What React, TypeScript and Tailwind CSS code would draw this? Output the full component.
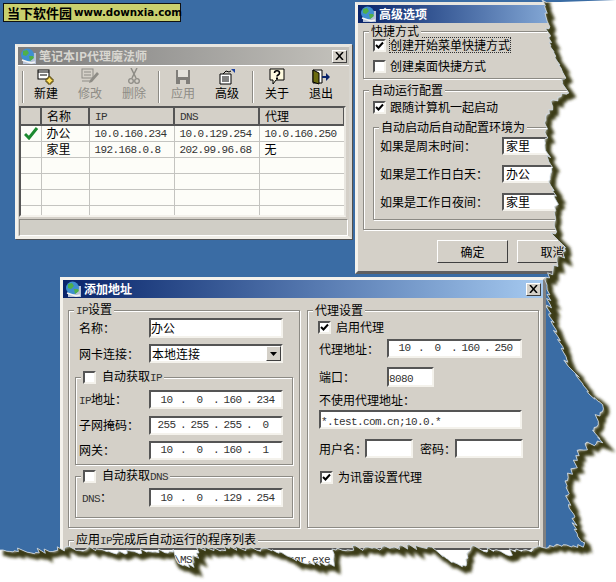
import React from 'react';

const MONO = "[font-family:'Liberation_Mono','Noto_Sans_CJK_SC',monospace] text-[11px] tracking-[-0.6px] text-[#333]";
const raised = 'border border-t-white border-l-white border-r-[#404040] border-b-[#404040] bg-[#d4d0c8]';
const sunken = 'border-2 border-t-[#555] border-l-[#555] border-r-[#f4f2ec] border-b-[#f4f2ec] bg-white';

// torn paper outline, hand read from the screenshot
const EDGE: [number, number][] = [
  [544, 0], [547, 15], [547, 30], [550, 45], [557, 60], [563, 70], [563, 83], [566, 90], [553, 100], [545, 130],
  [547, 150], [553, 170], [550, 180], [557, 200], [557, 212], [553, 235], [563, 245], [567, 249], [557, 262],
  [550, 272], [547, 285], [548, 300], [550, 315], [553, 325], [563, 350], [567, 365], [577, 375], [583, 385],
  [590, 395], [603, 405], [597, 420], [593, 430], [600, 440], [580, 450], [577, 460], [567, 480], [567, 500],
  [573, 515], [575, 530], [580, 540], [587, 545], [550, 546], [540, 548], [517, 550], [507, 553], [470, 547],
  [466, 566], [452, 563], [430, 546], [400, 547], [343, 548], [333, 550], [332, 564], [300, 561], [270, 549],
  [197, 548], [195, 566], [178, 563], [175, 551], [117, 552], [83, 548], [40, 551], [0, 550],
];

function tornPath() {
  let d = '';
  let k = 1;
  for (let i = 0; i < EDGE.length - 1; i++) {
    const [x1, y1] = EDGE[i];
    const [x2, y2] = EDGE[i + 1];
    const n = Math.max(1, Math.ceil(Math.hypot(x2 - x1, y2 - y1) / 3));
    for (let s = 0; s < n; s++) {
      const t = s / n;
      const r = Math.sin(k * 12.9898) * 43758.5453;
      const f = r - Math.floor(r) - 0.5;
      k++;
      const x = x1 + (x2 - x1) * t + f * 6;
      const y = y1 + (y2 - y1) * t + f * 6;
      d += `${d ? 'L' : 'M'}${x.toFixed(1)} ${y.toFixed(1)} `;
    }
  }
  return d + 'L0 550';
}
const EDGE_PATH = tornPath();

function TornEdge() {
  const white = `${EDGE_PATH} L0 582 L616 582 L616 0 Z`;
  return (
    <svg className="absolute inset-0" width="616" height="582" viewBox="0 0 616 582">
      <defs>
        <clipPath id="paper">
          <path d={white} />
        </clipPath>
        <filter id="soft">
          <feGaussianBlur stdDeviation="1.6" />
        </filter>
      </defs>
      <path d={white} fill="#ffffff" />
      <g clipPath="url(#paper)">
        <path d={EDGE_PATH} transform="translate(3 3)" fill="none" stroke="#3a3a12" strokeWidth="6" filter="url(#soft)" />
      </g>
      <path d={EDGE_PATH} fill="none" stroke="#cfdbe6" strokeWidth="0.8" />
    </svg>
  );
}

function Globe() {
  return (
    <svg width="17" height="17" viewBox="0 0 17 17" className="shrink-0">
      <rect x="3" y="5" width="13" height="11" fill="#b8c4d8" />
      <circle cx="7.5" cy="7" r="6.5" fill="#3f8fd0" />
      <path d="M3 3l4-1 2 3-3 3-3-1zM9 8l4 0 1 2-4 3z" fill="#4fb04a" />
      <path d="M2 12l9 3 4-1" stroke="#f4f4f4" strokeWidth="1.5" fill="none" />
    </svg>
  );
}

function CloseBox() {
  return (
    <div className={`${raised} w-[15px] h-[13px] flex items-center justify-center`}>
      <svg width="9" height="8" viewBox="0 0 9 8">
        <path d="M1 0l7 8M8 0l-7 8" stroke="#000" strokeWidth="1.5" fill="none" />
      </svg>
    </div>
  );
}

function TitleBar({ title, inactive, close = true }: { title: string; inactive?: boolean; close?: boolean }) {
  return (
    <div
      className={`flex items-center h-[18px] pl-[2px] pr-[2px] gap-[2px] ${
        inactive ? 'bg-gradient-to-r from-[#7c7c7c] to-[#c4c2bc]' : 'bg-gradient-to-r from-[#0a246a] to-[#a6caf0]'
      }`}
    >
      <Globe />
      <span className={`flex-1 font-bold text-[12px] leading-none whitespace-nowrap ${inactive ? 'text-[#d8d6d0]' : 'text-white'}`}>{title}</span>
      {close && <CloseBox />}
    </div>
  );
}

function Group({ title, legend, className, children }: { title?: string; legend?: React.ReactNode; className: string; children?: React.ReactNode }) {
  return (
    <div className={`relative border border-[#8c8a84] shadow-[1px_1px_0_#fff,inset_1px_1px_0_#fff] ${className}`}>
      <div className="absolute top-[-8px] left-[5px] bg-[#d4d0c8] px-[2px] h-[14px] leading-[14px] flex items-center whitespace-nowrap">
        {legend ?? title}
      </div>
      {children}
    </div>
  );
}

function Check({ on }: { on?: boolean }) {
  return (
    <div className={`${sunken} w-[13px] h-[13px] shrink-0 flex items-center justify-center`}>
      {on && (
        <svg width="9" height="9" viewBox="0 0 9 9">
          <path d="M1 4l2.5 2.5L8 1.5" stroke="#000" strokeWidth="2" fill="none" />
        </svg>
      )}
    </div>
  );
}

function Mono({ children }: { children: React.ReactNode }) {
  return <span className={MONO}>{children}</span>;
}

function IpField({ parts, className }: { parts: string[]; className: string }) {
  return (
    <div className={`${sunken} h-[19px] flex items-center pl-[2px] ${className}`}>
      {parts.map((p, i) => (
        <div key={i} className="flex w-[33px] shrink-0">
          <span className={`${MONO} w-[27px] text-center`}>{p}</span>
          {i < 3 && <span className={`${MONO} w-[6px] text-center`}>.</span>}
        </div>
      ))}
    </div>
  );
}

function ToolBtn({ label, off, children }: { label: string; off?: boolean; children: React.ReactNode }) {
  return (
    <div className={`w-[44px] flex flex-col items-center ${off ? 'text-[#8e8c86]' : 'text-black'}`}>
      <div className="h-[17px] flex items-center justify-center">{children}</div>
      <div className="text-[12px] leading-[14px] mt-[1px] whitespace-nowrap">{label}</div>
    </div>
  );
}

const Sep = () => <div className="w-[2px] h-[32px] self-center border-l border-l-[#8c8a84] border-r border-r-white" />;

const rows = [
  { name: '办公', ip: '10.0.160.234', dns: '10.0.129.254', proxy: '10.0.160.250', on: true },
  { name: '家里', ip: '192.168.0.8', dns: '202.99.96.68', proxy: '无' },
  {}, {}, {}, {},
] as { name?: string; ip?: string; dns?: string; proxy?: string; on?: boolean }[];

function MainWindow() {
  return (
    <div className="absolute left-[15px] top-[44px] w-[337px] h-[195px] bg-[#d4d0c8] border-[3px] border-t-[#e8e6e0] border-l-[#f4f2ec] border-r-[#d8d6d0] border-b-[#f0eee8] shadow-[1px_1px_0_#505050]">
      <TitleBar title="笔记本IP代理魔法师" inactive />
      <div className="flex items-start h-[41px] pt-[2px] pl-[4px] border-t border-t-white">
        <Sep />
        <ToolBtn label="新建">
          <svg width="18" height="16" viewBox="0 0 18 16">
            <rect x="1" y="1" width="11" height="9" fill="#fff" stroke="#000" />
            <path d="M1 3h11M3 6h7" stroke="#000" />
            <path d="M11 8h3v2h2v3h-2v2h-3v-2H9v-3h2z" fill="#ffe060" stroke="#504000" />
          </svg>
        </ToolBtn>
        <ToolBtn label="修改" off>
          <svg width="20" height="17" viewBox="0 0 20 17">
            <rect x="2" y="1" width="11" height="9" fill="#d4d0c8" stroke="#8e8c86" />
            <path d="M4 4h7M4 7h7M2 13h8" stroke="#8e8c86" />
            <path d="M17 4l2 2-7 8-3 1 1-3z" fill="#8e8c86" />
          </svg>
        </ToolBtn>
        <ToolBtn label="删除" off>
          <svg width="12" height="17" viewBox="0 0 12 17">
            <path d="M3 0l5 10M9 0L4 10" stroke="#8e8c86" strokeWidth="1.5" />
            <circle cx="3" cy="13" r="2.3" fill="none" stroke="#8e8c86" strokeWidth="1.3" />
            <circle cx="9" cy="13" r="2.3" fill="none" stroke="#8e8c86" strokeWidth="1.3" />
          </svg>
        </ToolBtn>
        <div className="w-[2px]" />
        <Sep />
        <div className="w-[1px]" />
        <ToolBtn label="应用" off>
          <svg width="16" height="16" viewBox="0 0 16 16">
            <rect x="1" y="1" width="14" height="14" fill="#807e7a" />
            <rect x="3" y="1" width="10" height="7" fill="#e4e2dc" />
            <rect x="5" y="11" width="6" height="4" fill="#d4d0c8" />
          </svg>
        </ToolBtn>
        <ToolBtn label="高级">
          <svg width="18" height="16" viewBox="0 0 18 16">
            <path d="M2 5h11v10H2z" fill="#fff" stroke="#000" />
            <path d="M4 8h7M4 10h7M4 12h7" stroke="#000" />
            <path d="M5 5l3-3 3 1 2-1" stroke="#000" fill="none" />
            <path d="M13 0h4v4z" fill="#1a3fa0" />
          </svg>
        </ToolBtn>
        <div className="w-[3px]" />
        <Sep />
        <div className="w-[1px]" />
        <ToolBtn label="关于">
          <svg width="16" height="17" viewBox="0 0 16 17">
            <path d="M1 1h14v11H7l-3 4v-4H1z" fill="#fffbe0" stroke="#000" />
            <path d="M5.5 5c0-3 5-3 5 0 0 2-2.5 2-2.5 3.5" stroke="#000" strokeWidth="1.6" fill="none" />
            <path d="M7 9.5h2v2H7z" fill="#000" />
          </svg>
        </ToolBtn>
        <ToolBtn label="退出">
          <svg width="18" height="16" viewBox="0 0 18 16">
            <path d="M1 1h9v13H1z" fill="#fff" stroke="#000" />
            <path d="M1 1l6 3v11l-6-2z" fill="#6a6a10" stroke="#000" />
            <path d="M10 7h4V4l4 4-4 4V9h-4z" fill="#0a246a" />
          </svg>
        </ToolBtn>
      </div>
      <div className="ml-[1px] w-[327px] h-[111px] overflow-hidden border-2 border-t-[#555] border-l-[#555] border-r-[#e8e6e0] border-b-[#f4f2ec] bg-[#fdfdf8]">
        <table className="w-[323px] table-fixed border-collapse text-[12px] text-black">
          <colgroup>
            <col className="w-[20px]" />
            <col className="w-[48px]" />
            <col className="w-[85px]" />
            <col className="w-[85px]" />
            <col className="w-[85px]" />
          </colgroup>
          <thead>
            <tr className="h-[17px]">
              {['', '名称', 'IP', 'DNS', '代理'].map((h, i) => (
                <th key={i} className="p-0 pl-[5px] font-normal text-left leading-none bg-[#d4d0c8] border-r-2 border-b-2 border-r-[#555] border-b-[#555]">
                  {i === 2 || i === 3 ? <Mono>{h}</Mono> : h}
                </th>
              ))}
            </tr>
          </thead>
          <tbody>
            {rows.map((r, i) => (
              <tr key={i} className="h-[16px]">
                <td className="p-0 border border-[#c4c4c0] border-l-0">
                  {r.on && (
                    <svg width="15" height="13" viewBox="0 0 15 13" className="ml-[3px]">
                      <path d="M1 7l4 4 8-10" stroke="#1c8a30" strokeWidth="3" fill="none" />
                    </svg>
                  )}
                </td>
                <td className="p-0 pl-[5px] border border-[#c4c4c0] leading-none">{r.name}</td>
                <td className="p-0 pl-[5px] border border-[#c4c4c0] leading-none"><Mono>{r.ip}</Mono></td>
                <td className="p-0 pl-[5px] border border-[#c4c4c0] leading-none"><Mono>{r.dns}</Mono></td>
                <td className="p-0 pl-[5px] border border-[#c4c4c0] leading-none">
                  {r.proxy === '无' ? r.proxy : <Mono>{r.proxy}</Mono>}
                </td>
              </tr>
            ))}
          </tbody>
        </table>
      </div>
      <div className="mt-[2px] mx-[1px] h-[17px] bg-[#d0cec6] border border-t-[#8c8a84] border-l-[#8c8a84] border-r-white border-b-white" />
    </div>
  );
}

function ComboRow({ label, value }: { label: string; value: string }) {
  return (
    <div className="flex items-center h-[18px]">
      <span className="w-[122px] shrink-0 whitespace-nowrap">{label}</span>
      <div className={`${sunken} w-[100px] shrink-0 h-[18px] pl-[2px] leading-[14px]`}>{value}</div>
    </div>
  );
}

function OptionsWindow() {
  return (
    <div className="absolute left-[355px] top-[2px] w-[245px] h-[272px] bg-[#d4d0c8] border-[3px] border-t-[#e8e6e0] border-l-[#f4f2ec] border-r-[#808080] border-b-[#606060] text-[12px] text-black">
      <TitleBar title="高级选项" close={false} />
      <Group title="快捷方式" className="mt-[8px] ml-[5px] w-[230px] h-[48px]">
        <div className="flex items-center gap-[4px] pl-[9px] pt-[6px] h-[20px]">
          <Check on />
          <span className="outline-1 outline-dotted outline-[#333] whitespace-nowrap leading-[14px]">创建开始菜单快捷方式</span>
        </div>
        <div className="flex items-center gap-[4px] pl-[9px] mt-[7px] h-[14px]">
          <Check />
          <span className="whitespace-nowrap">创建桌面快捷方式</span>
        </div>
      </Group>
      <Group title="自动运行配置" className="mt-[11px] ml-[5px] w-[230px] h-[140px]">
        <div className="flex items-center gap-[4px] pl-[9px] pt-[9px] h-[23px]">
          <Check on />
          <span className="whitespace-nowrap">跟随计算机一起启动</span>
        </div>
        <Group title="自动启动后自动配置环境为" className="mt-[13px] ml-[9px] w-[215px] h-[93px]">
          <div className="flex flex-col gap-[10px] pl-[6px] pt-[9px]">
            <ComboRow label="如果是周末时间：" value="家里" />
            <ComboRow label="如果是工作日白天：" value="办公" />
            <ComboRow label="如果是工作日夜间：" value="家里" />
          </div>
        </Group>
      </Group>
      <div className="flex gap-[9px] mt-[10px] ml-[79px]">
        <div className={`${raised} w-[71px] h-[23px] flex items-center justify-center`}>确定</div>
        <div className={`${raised} w-[71px] h-[23px] flex items-center justify-center`}>取消</div>
      </div>
    </div>
  );
}

function LabelField({ label, children, pl = 'pl-[10px]', w = 'w-[70px]' }: { label: React.ReactNode; children: React.ReactNode; pl?: string; w?: string }) {
  return (
    <div className={`flex items-center ${pl}`}>
      <span className={`${w} shrink-0 whitespace-nowrap`}>{label}</span>
      {children}
    </div>
  );
}

function AddressWindow() {
  return (
    <div className="absolute left-[60px] top-[277px] w-[486px] h-[310px] bg-[#d4d0c8] border-[3px] border-t-[#f4f2ec] border-l-[#f4f2ec] border-r-[#808080] border-b-[#606060] text-[12px] text-black">
      <TitleBar title="添加地址" />
      <div className="flex gap-[7px] mt-[12px] ml-[5px]">
        <Group
          legend={<span><Mono>IP</Mono>设置</span>}
          className="w-[232px] h-[218px]"
        >
          <div className="pt-[7px]">
            <LabelField label="名称：">
              <div className={`${sunken} w-[134px] h-[20px] leading-[16px]`}>办公</div>
            </LabelField>
            <div className="mt-[6px]">
              <LabelField label="网卡连接：">
                <div className={`${sunken} w-[134px] h-[19px] flex items-center pl-[1px]`}>
                  <span className="flex-1">本地连接</span>
                  <div className={`${raised} w-[15px] h-[15px] flex items-center justify-center`}>
                    <svg width="7" height="4" viewBox="0 0 7 4"><path d="M0 0h7L3.5 4z" fill="#000" /></svg>
                  </div>
                </div>
              </LabelField>
            </div>
          </div>
          <Group
            legend={
              <span className="flex items-center gap-[6px]">
                <Check />
                <span>自动获取<Mono>IP</Mono></span>
              </span>
            }
            className="mt-[14px] ml-[6px] w-[218px] h-[88px]"
          >
            <div className="flex flex-col gap-[6px] pt-[12px]">
              <LabelField label={<span><Mono>IP</Mono>地址：</span>} pl="pl-[3px]" w="w-[70px]">
                <IpField parts={['10', '0', '160', '234']} className="w-[134px]" />
              </LabelField>
              <LabelField label="子网掩码：" pl="pl-[3px]" w="w-[70px]">
                <IpField parts={['255', '255', '255', '0']} className="w-[134px]" />
              </LabelField>
              <LabelField label="网关：" pl="pl-[3px]" w="w-[70px]">
                <IpField parts={['10', '0', '160', '1']} className="w-[134px]" />
              </LabelField>
            </div>
          </Group>
          <Group
            legend={
              <span className="flex items-center gap-[6px]">
                <Check />
                <span>自动获取<Mono>DNS</Mono></span>
              </span>
            }
            className="mt-[11px] ml-[6px] w-[218px] h-[42px]"
          >
            <div className="pt-[11px]">
              <LabelField label={<span><Mono>DNS</Mono>：</span>} pl="pl-[6px]" w="w-[67px]">
                <IpField parts={['10', '0', '129', '254']} className="w-[134px]" />
              </LabelField>
            </div>
          </Group>
        </Group>
        <Group title="代理设置" className="w-[232px] h-[218px]">
          <div className="flex items-center gap-[5px] pl-[10px] pt-[7px]">
            <Check on />
            <span>启用代理</span>
          </div>
          <div className="mt-[3px]">
            <LabelField label="代理地址：" pl="pl-[11px]" w="w-[68px]">
              <IpField parts={['10', '0', '160', '250']} className="w-[135px]" />
            </LabelField>
          </div>
          <div className="mt-[9px]">
            <LabelField label="端口：" pl="pl-[11px]" w="w-[68px]">
              <div className={`${sunken} w-[47px] h-[20px] leading-[16px]`}><Mono>8080</Mono></div>
            </LabelField>
          </div>
          <div className="pl-[11px] mt-[5px] h-[16px] leading-[16px]">不使用代理地址：</div>
          <div className={`${sunken} ml-[11px] mt-[2px] w-[203px] h-[19px] leading-[15px]`}>
            <Mono>*.test.com.cn;10.0.*</Mono>
          </div>
          <div className="flex items-center pl-[11px] mt-[10px]">
            <span className="w-[46px] shrink-0 whitespace-nowrap">用户名：</span>
            <div className={`${sunken} w-[48px] h-[19px]`} />
            <span className="ml-[7px] w-[35px] shrink-0 whitespace-nowrap">密码：</span>
            <div className={`${sunken} w-[68px] h-[19px]`} />
          </div>
          <div className="flex items-center gap-[5px] pl-[12px] mt-[10px]">
            <Check on />
            <span>为讯雷设置代理</span>
          </div>
        </Group>
      </div>
      <Group
        legend={<span>应用<Mono>IP</Mono>完成后自动运行的程序列表</span>}
        className="mt-[12px] ml-[5px] w-[471px] h-[40px]"
      >
        <div className={`${sunken} mx-[6px] mt-[7px] h-[26px] pl-[1px] leading-[16px]`}>
          <Mono>C:\Program Files\MSN Messenger\msnmsgr.exe</Mono>
        </div>
      </Group>
    </div>
  );
}

export default function App() {
  return (
    <div className="relative w-[616px] h-[582px] overflow-hidden bg-[#3a6ca4] font-['Noto_Sans_CJK_SC',sans-serif] text-[12px] text-black">
      <div className="absolute left-[3px] top-[3px] w-[178px] h-[19px] bg-[#c9d06e] border border-[#111] flex items-center pl-[3px] gap-[2px] whitespace-nowrap">
        <span className="font-bold text-[13px] leading-none">当下软件园</span>
        <span className="font-bold text-[10.3px] leading-none [font-family:'DejaVu_Sans',sans-serif]">www.downxia.com</span>
      </div>
      <MainWindow />
      <OptionsWindow />
      <AddressWindow />
      <TornEdge />
    </div>
  );
}
